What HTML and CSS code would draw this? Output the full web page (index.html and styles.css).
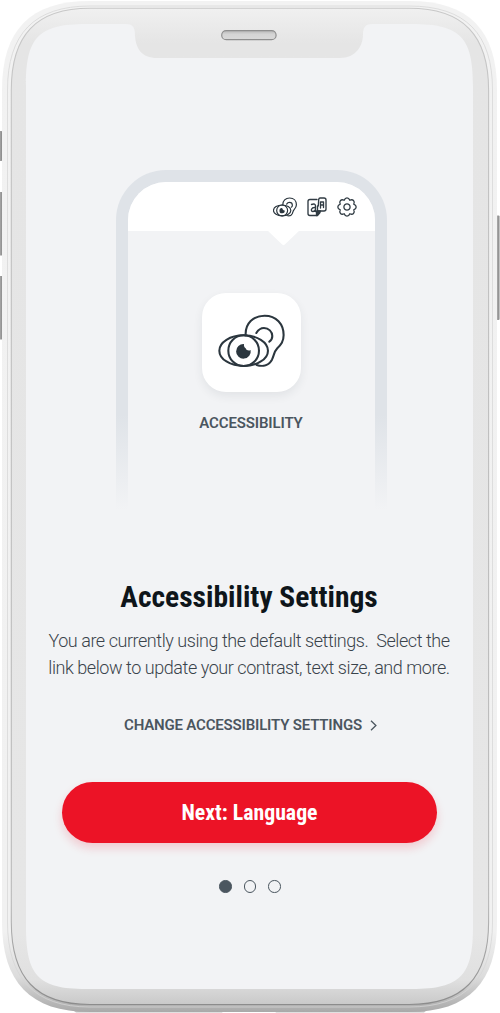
FILE: index.html
```html
<!DOCTYPE html>
<html lang="en">
<head>
<meta charset="utf-8">
<title>Accessibility Settings</title>
<link rel="stylesheet" href="styles.css">
</head>
<body>
<div class="device">
  <svg class="frame" viewBox="0 0 500 1013" aria-hidden="true">
    <defs>
      <linearGradient id="shell" x1="0" y1="0" x2="0" y2="1">
        <stop offset="0" stop-color="#f2f2f2"/><stop offset=".92" stop-color="#f1f1f1"/><stop offset=".965" stop-color="#dcdcdc"/><stop offset="1" stop-color="#a9a9a9"/>
      </linearGradient>
      <linearGradient id="bezel" x1="0" y1="0" x2="0" y2="1">
        <stop offset="0" stop-color="#f0f0f0"/><stop offset=".035" stop-color="#e5e5e5"/><stop offset=".93" stop-color="#e6e6e6"/><stop offset=".975" stop-color="#e0e0e0"/><stop offset="1" stop-color="#c9c9c9"/>
      </linearGradient>
      <linearGradient id="rim" x1="0" y1="0" x2="0" y2="1">
        <stop offset="0" stop-color="#c8c8c8"/><stop offset=".2" stop-color="#c0c0c0"/><stop offset=".9" stop-color="#b8b8b8"/><stop offset="1" stop-color="#8c8c8c"/>
      </linearGradient>
      <linearGradient id="key" x1="0" x2="1"><stop offset="0" stop-color="#b5b5b5"/><stop offset="1" stop-color="#858585"/></linearGradient>
      <linearGradient id="slot" x1="0" y1="0" x2="0" y2="1"><stop offset="0" stop-color="#b8b8b8"/><stop offset=".4" stop-color="#d4d4d4"/><stop offset="1" stop-color="#d9d9d9"/></linearGradient>
    </defs>
    <g fill="url(#key)">
      <rect x="-1" y="131" width="3.2" height="30" rx="1"/><rect x="-1" y="192" width="3.6" height="63.500" rx="1"/><rect x="-1" y="276" width="3.600" height="63.500" rx="1"/><rect x="496.500" y="215.500" width="3" height="104.500" rx="1"/>
    </g>
    <path fill="#c4c4c4" d="M70 1008H228L222 1012.500H76ZM270 1008H430L424 1012.500H276Z"/>
    <path fill="url(#shell)" d="M2 90C2 30 30 1 90 1H409C469 1 497 30 497 90V922C497 982 469 1012 409 1012H90C30 1012 2 982 2 922Z"/>
    <path fill="none" stroke="#d6d6d6" stroke-width="1" d="M7.500 90C7.500 34 34 6 90 6H409C466 6 492.500 34 492.500 90V922C492.500 978 466 1007 409 1007H90C34 1007 7.500 978 7.500 922Z" opacity=".75"/>
    <path fill="url(#bezel)" stroke="url(#rim)" stroke-width="1.100" d="M11.300 90C11.300 35 36 8.300 90 8.300H409C463 8.300 488.600 35 488.600 90V922C488.600 978 463 1004.500 409 1004.500H90C36 1004.500 11.300 978 11.300 922Z"/>
    <path fill="#f2f3f5" d="M26 86C26 38 38 24 86 24H126C132 24 134.500 27 134.800 32C135 49 142 58 157 58H340C356 58 363 46 363 34C363 27 366 24 372 24H412C461 24 473 38 473 86V927C473 975 461 989 412 989H86C38 989 26 975 26 927Z"/>
    <rect x="221.700" y="30.700" width="54.400" height="9" rx="4.500" fill="url(#slot)" stroke="#8e8e8e" stroke-width="1.200"/>
  </svg>

  <main class="screen">
    <section class="preview">
      <div class="preview-screen">
        <header class="toolbar">
          <svg class="tool-a11y" viewBox="85 98 202 162">
            <defs>
              <g id="eye-ear" fill="none" stroke="#2b363e" stroke-linecap="round" stroke-linejoin="round">
                <path d="M168 162C166 126 191 103 225 103C260 103 282 128 282 161C282 181 274 190 263 201C253 211 253 223 247 235C238 252 220 257 201 251"/>
                <path d="M200 155C206 145 213 140 223 140C237 140 248 151 248 164C248 171 245 177 239 181"/>
                <ellipse cx="162" cy="208" rx="73" ry="46"/>
                <circle cx="162" cy="208" r="46"/>
                <path fill="#2b363e" stroke="none" d="M163 188A22 22 0 1 0 183 206C178 210 170 207 168 201C164 198 162 193 163 188Z"/>
              </g>
            </defs>
            <use href="#eye-ear" stroke-width="10"/>
          </svg>
          <svg class="tool-lang" viewBox="0 0 20 20" fill="none" stroke="#303b43" stroke-width="1.350" stroke-linejoin="round" stroke-linecap="round">
            <path d="M10 2.500H3Q1 2.500 1 4.500V16.500Q1 18.500 3 18.500H10.500L13 15.500M4.500 7.500Q8.500 6 8.500 9V14.500M8.500 10.500C4 10 3.200 14.500 6 14.500Q8 14.500 8.500 12.500"/>
            <path d="M13 1H17Q19 1 19 3V12Q19 14 17 14H10.500V9M11.300 9L11.700 2.500Q12 1 13 1M13.500 5H16.500M13.500 8H16.500M13.500 11V5M16.500 5V10.500"/>
            <path d="M9.500 14V18.500L13.500 14Z" fill="#303b43"/>
          </svg>
          <svg class="tool-gear" viewBox="-10 -10 20 20" fill="none" stroke="#303b43" stroke-width="1.300" stroke-linejoin="round">
            <path d="M-2.800 -6.750C-1.600 -10 1.600 -10 2.800 -6.750C5.940 -8.200 8.200 -5.940 6.750 -2.800C10 -1.600 10 1.600 6.750 2.800C8.200 5.940 5.940 8.200 2.800 6.750C1.600 10 -1.600 10 -2.800 6.750C-5.940 8.200 -8.200 5.940 -6.750 2.800C-10 1.600 -10 -1.600 -6.750 -2.800C-8.200 -5.940 -5.940 -8.200 -2.800 -6.750Z"/><circle r="3.100"/>
          </svg>
          <span class="pointer"></span>
        </header>
        <div class="tile"><svg viewBox="85 98 202 162"><use href="#eye-ear" stroke-width="6.200"/></svg></div>
        <p class="tile-label">ACCESSIBILITY</p>
      </div>
    </section>
    <h1 class="title">Accessibility Settings</h1>
    <p class="copy">You are currently using the default settings.&nbsp; Select the<br>link below to update your contrast, text size, and more.</p>
    <a class="link" href="#"><span>CHANGE ACCESSIBILITY SETTINGS</span>
      <svg viewBox="0 0 7 11" fill="none" stroke="#4b565f" stroke-width="1.300"><path d="M1 .7L5.900 5.500L1 10.300"/></svg>
    </a>
    <button class="next" type="button">Next: Language</button>
    <div class="dots"><i class="dot on"></i><i class="dot"></i><i class="dot"></i></div>
  </main>
</div>
</body>
</html>
```
FILE: styles.css
```css
* { box-sizing: border-box; margin: 0; padding: 0; }
body { width: 500px; height: 1013px; background: #fff; font-family: Roboto, "Liberation Sans", sans-serif; overflow: hidden; }
.device { position: relative; width: 500px; height: 1013px; }
.frame { position: absolute; inset: 0; width: 500px; height: 1013px; }
.screen { position: relative; height: 1013px; padding: 170px 2px 0 0; display: flex; flex-direction: column; align-items: center; }
.preview { width: 271px; height: 345px; margin-left: 5px; padding: 12px 12px 0; flex: none; border-radius: 50px 50px 0 0; background: linear-gradient(#dfe3e8 0 245px, #f2f3f5 340px); }
.preview-screen { height: 333px; border-radius: 38px 38px 0 0; background: #f2f3f5; display: flex; flex-direction: column; align-items: center; }
.toolbar { position: relative; width: 100%; height: 49px; flex: none; border-radius: 38px 38px 0 0; background: #fff; display: flex; align-items: center; justify-content: flex-end; padding-right: 18px; }
.tool-a11y { width: 24px; height: 20px; margin-right: 10px; }
.tool-lang { width: 20px; height: 20px; margin-right: 10px; }
.tool-gear { width: 20px; height: 20px; }
.pointer { position: absolute; left: 139px; top: 48px; width: 33px; height: 16px; background: #fff; clip-path: polygon(0 0, 100% 0, 54% 90%, 50% 96%, 46% 90%); }
.tile { width: 99px; height: 99px; margin-top: 62px; flex: none; border-radius: 24px; background: #fff; box-shadow: 0 4px 10px rgba(40, 50, 60, .08); display: flex; align-items: center; justify-content: center; }
.tile svg { width: 67.300px; height: 54px; margin: 0 0 4px 1px; }
.tile-label { margin: 22px 1px 0 0; font-size: 15px; line-height: 18px; font-weight: 600; letter-spacing: -.14px; color: #4b565f; white-space: nowrap; }
.title { margin-top: 64px; height: 36px; font-family: "Roboto Condensed", Roboto, sans-serif; font-stretch: 75%; font-size: 29.500px; line-height: 36px; font-weight: 700; color: #0e151a; white-space: nowrap; }
.copy { margin-top: 12px; font-size: 18px; line-height: 27px; font-weight: 300; letter-spacing: -.445px; color: #3a434b; text-align: center; white-space: nowrap; }
.link { margin: 34px 0 0 3px; height: 20px; display: flex; align-items: center; gap: 8px; font-size: 15px; font-weight: 600; letter-spacing: -.18px; color: #4b565f; text-decoration: none; white-space: nowrap; }
.link svg { width: 7px; height: 11px; }
.next { margin: 47px 0 0 1px; width: 375px; height: 61px; border: 0; border-radius: 31px; background: #ec1326; box-shadow: 0 5px 10px rgba(236, 19, 38, .18); color: #fff; font-family: "Roboto Condensed", Roboto, sans-serif; font-stretch: 75%; font-size: 21.800px; font-weight: 700; white-space: nowrap; }
.dots { margin: 37px 0 0 2px; display: flex; gap: 12px; }
.dot { width: 12.500px; height: 12.500px; border: 1.300px solid #4b565f; border-radius: 50%; }
.dot.on { background: #4b565f; }
```
